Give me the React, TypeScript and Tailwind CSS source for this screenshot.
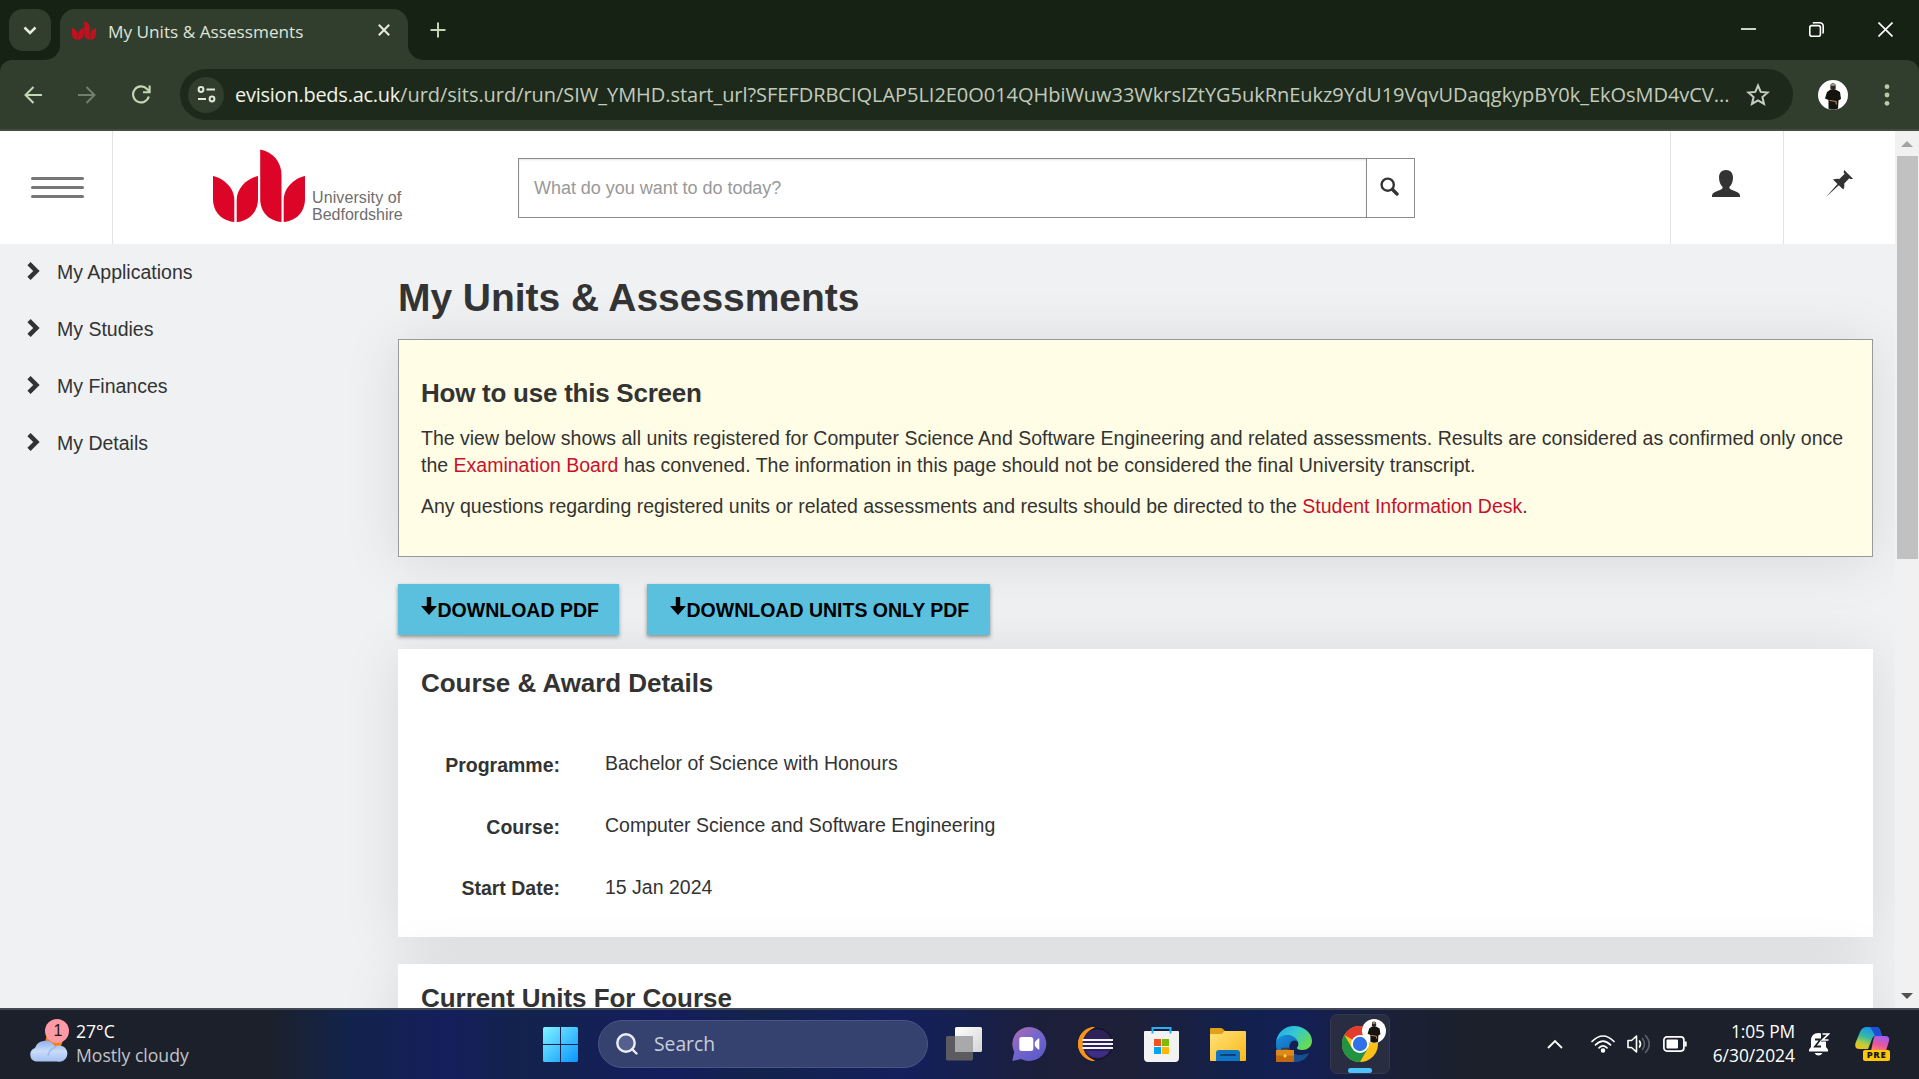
import type { ReactNode } from "react";

const ui = "font-['Open_Sans',sans-serif]";

function Petals({ className, color }: { className: string; color: string }) {
  return (
    <svg viewBox="0 0 92 73" className={className} fill={color} preserveAspectRatio="none">
      <path d="M0 27C11 29.500 21.300 39 21.300 51V73C9 72 0 63 0 50Z" />
      <path d="M45 27V50C45 63 36 72 23.700 73V51C23.700 39 34 29.500 45 27Z" />
      <path d="M47.200 0.500C60 3 68.500 13 68.500 26V73C56 72 47.200 63 47.200 50Z" />
      <path d="M92 27V50C92 63 83 72 70.700 73V51C70.700 39 81 29.500 92 27Z" />
    </svg>
  );
}

function Avatar({ className }: { className: string }) {
  return (
    <svg viewBox="0 0 30 30" className={className}>
      <circle cx="15" cy="15" r="15" fill="#fff" />
      <path d="M12.500 4.500q2.500-2.500 5 0l.3 4q-2.500 3-5.500 0z" fill="#2c2724" />
      <path d="M13 4.600q2-1.600 4 0l-.3 1.200h-3.400z" fill="#b5a58c" />
      <path d="M12.500 9.500 17.500 9.500 22 12 23 19 20.500 20.500 20 28.500Q15 31 10.500 28.500L10.500 20 7 18.500 9 12Z" fill="#15130f" />
      <path d="M11.500 20.500 18 21.500 18.300 24.500" stroke="#b58a4a" strokeWidth="1.200" fill="none" />
    </svg>
  );
}

function TitleBar() {
  return (
    <div className="flex h-[60px] items-start bg-[#162213] pl-[9px]">
      <div className="mt-[9px] flex h-[42px] w-[42px] items-center justify-center rounded-[14px] bg-[#313d2d]">
        <svg viewBox="0 0 14 9" className="h-[9px] w-[14px]" fill="none" stroke="#e6ecdf" strokeWidth="2.500">
          <path d="M1.500 1.500 7 7 12.500 1.500" />
        </svg>
      </div>
      <div className="relative ml-[9px] mt-[9px] flex h-[51px] w-[348px] items-start rounded-t-[15px] bg-[#313d2d] pl-[12px] pr-[18px]">
        <svg viewBox="0 0 15 15" className="absolute -left-[15px] bottom-0 h-[15px] w-[15px]" fill="#313d2d">
          <path d="M15 0A15 15 0 0 1 0 15H15Z" />
        </svg>
        <svg viewBox="0 0 15 15" className="absolute -right-[15px] bottom-0 h-[15px] w-[15px]" fill="#313d2d">
          <path d="M0 0A15 15 0 0 0 15 15H0Z" />
        </svg>
        <Petals className="mt-[12px] h-[19px] w-[24px]" color="#c2101f" />
        <span className={`${ui} ml-[12px] mt-[11px] whitespace-nowrap text-[17.200px] leading-[24px] text-[#dfe5da]`}>My Units &amp; Assessments</span>
        <svg viewBox="0 0 12 12" className="ml-auto mt-[15px] h-[12px] w-[12px]" stroke="#e6ecdf" strokeWidth="2">
          <path d="M.8.8 11.200 11.200M11.200.8.8 11.200" />
        </svg>
      </div>
      <svg viewBox="0 0 16 16" className="ml-[22px] mt-[22px] h-[16px] w-[16px]" stroke="#c3d4b8" strokeWidth="2">
        <path d="M8 .5V15.500M.5 8H15.500" />
      </svg>
      <div className="ml-auto mr-[26px] mt-[22px] flex items-center">
        <svg viewBox="0 0 15 15" className="mr-[53px] h-[15px] w-[15px]" stroke="#fff" strokeWidth="1.600">
          <path d="M0 7H15" />
        </svg>
        <svg viewBox="0 0 15 15" className="mr-[54px] h-[15px] w-[15px]" fill="none" stroke="#fff" strokeWidth="1.600">
          <rect x=".8" y="3.600" width="10.600" height="10.600" rx="2" />
          <path d="M3.800 1Q4.200.8 5.500.8H10.500Q14.200.8 14.200 4.500V9.500Q14.200 11 13.600 11.500" />
        </svg>
        <svg viewBox="0 0 15 15" className="h-[15px] w-[15px]" stroke="#fff" strokeWidth="1.600">
          <path d="M.5.5 14.500 14.500M14.500.5.5 14.500" />
        </svg>
      </div>
    </div>
  );
}

function Toolbar() {
  return (
    <div className="bg-[#162213]">
      <div className="flex h-[71px] items-center rounded-t-[12px] border-b-2 border-[#454b43] bg-[#313d2d] pl-[24px]">
        <svg viewBox="0 0 18 18" className="h-[18px] w-[18px]" fill="none" stroke="#c3d9b6" strokeWidth="2">
          <path d="M18 9H2M9.500 1 1.500 9 9.500 17" />
        </svg>
        <svg viewBox="0 0 18 18" className="ml-[36px] h-[18px] w-[18px]" fill="none" stroke="#727f6c" strokeWidth="2">
          <path d="M0 9H16M8.500 1 16.500 9 8.500 17" />
        </svg>
        <svg viewBox="0 0 19 19" className="ml-[36px] h-[19px] w-[19px]" fill="none" stroke="#c3d9b6" strokeWidth="2.100">
          <path d="M16.800 11.500A8 8 0 1 1 15 4L17.500 6.500" />
          <path d="M11 7.200H17.600V.5" />
        </svg>
        <div className="ml-[29px] flex h-[51px] w-[1613px] items-center rounded-full bg-[#1d2a1b] pl-[8px] pr-[23px]">
          <div className="flex h-[36px] w-[36px] shrink-0 items-center justify-center rounded-full bg-[#313d2d]">
            <svg viewBox="0 0 19 17" className="h-[17px] w-[19px]" fill="none" stroke="#e3eadd" strokeWidth="2">
              <circle cx="4" cy="3.500" r="2.400" />
              <path d="M9.500 3.500H18M1 13H9" />
              <circle cx="15" cy="13" r="2.400" />
            </svg>
          </div>
          <div className={`${ui} ml-[11px] whitespace-nowrap text-[20px] leading-[30px] text-[#c2cabd]`}>
            <span className="tracking-[-0.250px] text-[#f0f3ec]">evision.beds.ac.uk</span>
            <span className="tracking-[-0.035px]">/urd/sits.urd/run/SIW_YMHD.start_url?SFEFDRBCIQLAP5LI2E0O014QHbiWuw33WkrsIZtYG5ukRnEukz9YdU19VqvUDaqgkypBY0k_EkOsMD4vCV...</span>
          </div>
          <svg viewBox="0 0 24 23" className="ml-auto h-[23px] w-[24px] shrink-0" fill="none" stroke="#c6cdc2" strokeWidth="2">
            <path d="M12 2.500 14.700 8.900 21.700 9.500 16.400 14.100 18 20.900 12 17.300 6 20.900 7.600 14.100 2.300 9.500 9.300 8.900Z" />
          </svg>
        </div>
        <Avatar className="ml-[25px] h-[30px] w-[30px]" />
        <svg viewBox="0 0 6 22" className="ml-[36px] h-[22px] w-[6px]" fill="#b5cba9">
          <circle cx="3" cy="2.700" r="2.400" />
          <circle cx="3" cy="11" r="2.400" />
          <circle cx="3" cy="19.300" r="2.400" />
        </svg>
      </div>
    </div>
  );
}

function SiteHeader() {
  return (
    <header className="flex h-[113px] bg-white">
      <div className="flex w-[113px] items-center border-r border-[#e3e3e3] pl-[31px]">
        <div className="mt-[-1px] flex w-[53px] flex-col gap-[6px]">
          <div className="h-[3px] rounded-full bg-[#777]" />
          <div className="h-[3px] rounded-full bg-[#777]" />
          <div className="h-[3px] rounded-full bg-[#777]" />
        </div>
      </div>
      <div className="ml-[100px] flex w-[305px] items-start pt-[18px]">
        <Petals className="h-[73px] w-[92px]" color="#dc0528" />
        <div className="ml-[7px] mt-[40px] text-[16px] leading-[17px] text-[#6e6e6e]">
          <div className="whitespace-nowrap tracking-[0.100px]">University of</div>
          <div className="whitespace-nowrap">Bedfordshire</div>
        </div>
      </div>
      <div className="mt-[27px] flex h-[60px] w-[897px] border border-[#8c8c8c]">
        <div className="flex flex-1 items-center pl-[15px] text-[18px] tracking-[-0.030px] text-[#999] shadow-[inset_0_1px_2px_rgba(0,0,0,0.12)]">What do you want to do today?</div>
        <div className="flex w-[48px] items-center justify-center border-l border-[#8c8c8c]">
          <svg viewBox="0 0 19 19" className="ml-[-2px] mt-[-3px] h-[19px] w-[19px]" fill="none" stroke="#333">
            <circle cx="7.700" cy="7.700" r="6.100" strokeWidth="2.400" />
            <path d="M12.500 12.500 17 17" strokeWidth="3.300" strokeLinecap="round" />
          </svg>
        </div>
      </div>
      <div className="ml-auto flex w-[113px] justify-center border-l border-[#e3e3e3] pr-[2px] pt-[39px]">
        <svg viewBox="0 0 28 27" className="h-[27px] w-[28px]" fill="#333">
          <path d="M14 0C18.500 0 21 3 21 7.500C21 11.500 19.500 15 17.500 16.800C17.300 18.300 17.700 19 19 19.600L25 22Q28 23.300 28 25.500V27H0V25.500Q0 23.300 3 22L9 19.600C10.300 19 10.700 18.300 10.500 16.800C8.500 15 7 11.500 7 7.500C7 3 9.500 0 14 0Z" />
        </svg>
      </div>
      <div className="flex w-[112px] justify-center border-l border-[#e3e3e3] pt-[39px]">
        <svg viewBox="0 0 27 27" className="h-[27px] w-[27px]" fill="#333">
          <path d="M18.200 0 27 8.700 24.500 9.300 23.300 8.300 18.300 13.500Q18.800 17 17.300 19.500L12.800 15.200 0 27 11.500 13.900 7 9.400Q10.500 8.200 13.400 8.900L18.700 3.700 17.600 2.500Z" />
        </svg>
      </div>
    </header>
  );
}

const navItems = ["My Applications", "My Studies", "My Finances", "My Details"];

function SideNav() {
  return (
    <nav className="w-[398px] shrink-0">
      {navItems.map((item) => (
        <div key={item} className="flex h-[57px] items-center pl-[27px]">
          <svg viewBox="0 0 13 18" className="mt-[-3px] h-[18px] w-[13px]" fill="#333">
            <path d="M3.600 0 12.600 9 3.600 18 0.400 14.800 6.200 9 0.400 3.200Z" />
          </svg>
          <span className="ml-[17px]">{item}</span>
        </div>
      ))}
    </nav>
  );
}

function DownloadButton({ children, className }: { children: ReactNode; className: string }) {
  return (
    <div className={`flex h-[51px] items-center bg-[#5bc0de] pl-[23px] font-bold text-black shadow-[0_2px_4px_rgba(0,0,0,0.4)] ${className}`}>
      <svg viewBox="0 0 16 18" className="mt-[-7px] h-[18px] w-[16px]" fill="#000">
        <path d="M5.800 0H10.200V9H16L8 18 0 9H5.800Z" />
      </svg>
      <span className="ml-[0.500px] mt-[2px] whitespace-nowrap">{children}</span>
    </div>
  );
}

const details = [
  ["Programme:", "Bachelor of Science with Honours"],
  ["Course:", "Computer Science and Software Engineering"],
  ["Start Date:", "15 Jan 2024"],
];

const cardShadow = "shadow-[0_4px_54px_rgba(0,0,0,0.100)]";

function Content() {
  return (
    <main className="w-[1475px] shrink-0">
      <h1 className="pt-[34px] text-[39px] font-bold leading-[39px] tracking-[-0.050px]">My Units &amp; Assessments</h1>
      <section className={`mt-[22px] h-[218px] border border-[#999] bg-[#fffde5] px-[22px] pt-[39px] ${cardShadow}`}>
        <h2 className="text-[26px] font-bold leading-[29px] tracking-[-0.250px]">How to use this Screen</h2>
        <p className="mt-[17px] leading-[27px]">
          <span className="whitespace-nowrap">The view below shows all units registered for Computer Science And Software Engineering and related assessments. Results are considered as confirmed only once</span>
          <br />
          the <a className="text-[#c8102e]">Examination Board</a> has convened. The information in this page should not be considered the final University transcript.
        </p>
        <p className="mt-[14px] leading-[27px]">
          Any questions regarding registered units or related assessments and results should be directed to the <a className="text-[#c8102e]">Student Information Desk</a>.
        </p>
      </section>
      <div className="mt-[27px] flex gap-[28px]">
        <DownloadButton className="w-[221px]">DOWNLOAD PDF</DownloadButton>
        <DownloadButton className="w-[343px]">DOWNLOAD UNITS ONLY PDF</DownloadButton>
      </div>
      <section className={`mt-[14px] h-[288px] bg-white pt-[20px] ${cardShadow}`}>
        <h2 className="px-[23px] text-[26px] font-bold leading-[29px] tracking-[-0.050px]">Course &amp; Award Details</h2>
        <dl className="mt-[35px]">
          {details.map(([label, value]) => (
            <div key={label} className="group flex h-[62px] items-center">
              <dt className="w-[162px] pt-[4px] text-right font-bold group-last:pt-[2px]">{label}</dt>
              <dd className="ml-[45px]">{value}</dd>
            </div>
          ))}
        </dl>
      </section>
      <section className={`mt-[27px] h-[200px] bg-white px-[23px] pt-[20px] ${cardShadow}`}>
        <h2 className="text-[26px] font-bold leading-[29px] tracking-[-0.050px]">Current Units For Course</h2>
      </section>
    </main>
  );
}

function Scrollbar() {
  return (
    <div className="relative flex w-[24px] shrink-0 flex-col items-center bg-[#f1f1f1]">
      <svg viewBox="0 0 12 6" className="mt-[10px] h-[6px] w-[12px]" fill="#a3a3a3">
        <path d="M6 0 12 6H0Z" />
      </svg>
      <div className="mt-[9px] h-[403px] w-[21px] bg-[#c1c1c1]" />
      <svg viewBox="0 0 12 6" className="mb-[9px] mt-auto h-[6px] w-[12px]" fill="#505050">
        <path d="M6 6 12 0H0Z" />
      </svg>
    </div>
  );
}

function WeatherIcon() {
  return (
    <div className="relative ml-[28px] mt-[-5px] h-[45px] w-[42px]">
      <svg viewBox="0 0 42 45" className="h-[45px] w-[42px]">
        <defs>
          <linearGradient id="cloud" x1="0" y1="0" x2="0" y2="1">
            <stop offset="0" stopColor="#8fb2ee" />
            <stop offset=".5" stopColor="#c9dbf8" />
            <stop offset="1" stopColor="#a3c0f2" />
          </linearGradient>
        </defs>
        <circle cx="26" cy="22" r="8.500" fill="#f2811d" />
        <path d="M8 42.500A7 7 0 0 1 7 29A11 11 0 0 1 27 27.500A8.200 8.200 0 1 1 29 42.500Z" fill="url(#cloud)" />
        <path d="M20 37Q21 30 28 28" fill="none" stroke="#87a9e8" strokeWidth="1.500" opacity=".6" />
      </svg>
      <div className="absolute left-[17px] top-0 flex h-[24px] w-[24px] items-center justify-center rounded-full bg-[#ff99a4] pl-[2px] text-[16px] leading-none text-[#1a1a1a]">1</div>
    </div>
  );
}

function WindowsIcon() {
  return (
    <svg viewBox="0 0 35 35" className="ml-[349px] mt-[2px] h-[35px] w-[35px] shrink-0">
      <defs>
        <linearGradient id="win" x1="0" y1="0" x2="1" y2="1">
          <stop offset="0" stopColor="#80f4ff" />
          <stop offset="1" stopColor="#0a94ff" />
        </linearGradient>
      </defs>
      <path d="M1.500 0H17V17H0V1.500Q0 0 1.500 0ZM18 0H33.500Q35 0 35 1.500V17H18ZM0 18H17V35H1.500Q0 35 0 33.500ZM18 18H35V33.500Q35 35 33.500 35H18Z" fill="url(#win)" />
    </svg>
  );
}

function TaskViewIcon() {
  return (
    <svg viewBox="0 0 36 36" className="h-[36px] w-[36px]">
      <defs>
        <linearGradient id="tv1" x1="0" y1="0" x2="1" y2="1">
          <stop offset="0" stopColor="#fff" />
          <stop offset="1" stopColor="#d4d4d4" />
        </linearGradient>
      </defs>
      <rect x="0" y="10" width="27" height="24.500" rx="1.500" fill="#5c5c60" />
      <rect x="9" y="1" width="27" height="25" rx="1.500" fill="url(#tv1)" />
      <rect x="9" y="10" width="18" height="16" fill="#a9a9ab" />
    </svg>
  );
}

function ChatIcon() {
  return (
    <svg viewBox="0.700 0 36 36" className="h-[36px] w-[36px]">
      <defs>
        <linearGradient id="chat" x1="0" y1="0" x2=".8" y2="1">
          <stop offset="0" stopColor="#b26cae" />
          <stop offset=".5" stopColor="#7566cc" />
          <stop offset="1" stopColor="#5a59c8" />
        </linearGradient>
      </defs>
      <path d="M18 1A17 17 0 1 1 10 33L1 35 3 26A17 17 0 0 1 18 1Z" fill="url(#chat)" />
      <rect x="8" y="11" width="14" height="14" rx="2.500" fill="#fff" />
      <path d="M23.500 16 27 12.500H28V23.500H27L23.500 20Z" fill="#fff" />
    </svg>
  );
}

function EclipseIcon() {
  return (
    <svg viewBox="0 0 36 36" className="h-[36px] w-[36px]">
      <path d="M17 1A17 17 0 0 0 17 35Q8 30 8 18 8 6 17 1Z" fill="#f7941e" />
      <circle cx="19.300" cy="18" r="15.500" fill="#2c2255" stroke="#0e0c1a" strokeWidth="1" />
      <path d="M17 1A17 17 0 0 0 17 35Q4.500 29 4.500 18 4.500 7 17 1Z" fill="#f7941e" />
      <path d="M8 25H31Q27 31.500 19.500 31.500 12 31.500 8 25Z" fill="#46339c" opacity=".7" />
      <path d="M4.500 14H35M4.500 18H35M4.500 22H35" stroke="#f4f3fb" strokeWidth="2.200" />
    </svg>
  );
}

function StoreIcon() {
  return (
    <svg viewBox="0.500 0 36 36" className="h-[36px] w-[36px]">
      <path d="M1.500 5H34.500Q35.500 5 35.500 6V32Q35.500 36 31.500 36H4.500Q.5 36 .5 32V6Q.5 5 1.500 5Z" fill="#f3f3f4" />
      <path d="M9 7.500V2H27V7.500" fill="none" stroke="#29b1f5" strokeWidth="2" />
      <rect x="10.500" y="13" width="7" height="7" fill="#f25022" />
      <rect x="18.500" y="13" width="7" height="7" fill="#7fba00" />
      <rect x="10.500" y="21" width="7" height="7" fill="#00a4ef" />
      <rect x="18.500" y="21" width="7" height="7" fill="#ffb900" />
    </svg>
  );
}

function ExplorerIcon() {
  return (
    <svg viewBox="0 0 36 36" className="h-[36px] w-[36px]">
      <defs>
        <linearGradient id="fold" x1="0" y1="0" x2="1" y2="1">
          <stop offset="0" stopColor="#ffe27a" />
          <stop offset="1" stopColor="#fbb917" />
        </linearGradient>
      </defs>
      <path d="M0 8V3Q0 2 1 2H11Q12 2 13 3L15.500 5.500 12 9Z" fill="#e0a017" />
      <path d="M0 8H11Q12 8 13 7L14.500 5H35Q36 5 36 6V34Q36 35 35 35H1Q0 35 0 34Z" fill="url(#fold)" />
      <path d="M6 35V27Q6 24 9 24H27Q30 24 30 27V35Z" fill="#0f74c4" />
      <path d="M11 29H25" stroke="#0a3f77" strokeWidth="1.800" strokeLinecap="round" />
    </svg>
  );
}

function EdgeIcon() {
  return (
    <svg viewBox="0 0 36 36" className="h-[36px] w-[36px]">
      <defs>
        <linearGradient id="edgeTop" x1="0" y1="0" x2="1" y2=".6">
          <stop offset="0" stopColor="#1fa4e8" />
          <stop offset=".5" stopColor="#35c8d4" />
          <stop offset="1" stopColor="#66dc50" />
        </linearGradient>
        <linearGradient id="edgeBody" x1="0" y1="0" x2="1" y2="1">
          <stop offset="0" stopColor="#1590df" />
          <stop offset="1" stopColor="#114f9d" />
        </linearGradient>
      </defs>
      <path d="M0 18C0 10 7 8 11 9C17 9 21 12 21.500 16C17 12 12.500 17 13.500 23C15 29 24 31 33 27C30 33 25 36 18 36C7 36 0 28 0 18Z" fill="url(#edgeBody)" />
      <path d="M13.500 22C14 29 24 31 33 27C30 33 25 36 18 36C15 34 11 28 13.500 22Z" fill="#164f8f" />
      <path d="M0 16C1.500 6 9 0 18 0C28 0 36 7 36 15C36 21 31 24 26.500 24C22.500 24 20.500 23 21 21.500C23 19.500 22.500 17 21.500 15C19.500 11 15 9 11 9C6 9 2 11.500 0 16Z" fill="url(#edgeTop)" />
      <path d="M6 24V22.500H13V24" stroke="#5e3209" strokeWidth="1.300" fill="none" />
      <rect x="0" y="24" width="18" height="12" rx=".8" fill="#c26a10" />
      <rect x="0" y="24" width="18" height="5.500" fill="#dd8a1c" />
      <rect x="7.700" y="28.500" width="2.600" height="2.800" fill="#ffd94a" />
    </svg>
  );
}

function ChromeIcon() {
  return (
    <svg viewBox="0 0 36 36" className="h-[36px] w-[36px]">
      <circle cx="18" cy="18" r="18" fill="#fbc116" />
      <path d="M18 18 2.400 9A18 18 0 0 1 33.600 9H18Z" fill="#e33b2e" />
      <path d="M2.400 9A18 18 0 0 0 18 36L25.800 22.500 18 18 10.200 22.500Z" fill="#229342" />
      <circle cx="18" cy="18" r="9" fill="#fff" />
      <circle cx="18" cy="18" r="7.200" fill="#3071e8" />
    </svg>
  );
}

function Tray() {
  return (
    <div className="ml-auto flex h-full items-center pr-[29px]">
      <svg viewBox="0 0 16 10" className="h-[10px] w-[16px]" fill="none" stroke="#fff" strokeWidth="1.800">
        <path d="M1 9 8 2 15 9" />
      </svg>
      <svg viewBox="0 0 24 18" className="ml-[28px] h-[18px] w-[24px]" fill="none" stroke="#fff" strokeWidth="1.700" strokeLinecap="round">
        <path d="M1 6.500Q12-4.500 23 6.500M4.500 9.800Q12 2.300 19.500 9.800M8 12.800Q12 9 16 12.800" />
        <circle cx="12" cy="15.400" r="1.400" fill="#fff" />
      </svg>
      <svg viewBox="0 0 24 20" className="ml-[12px] h-[20px] w-[24px]" fill="none" stroke="#fff" strokeWidth="1.600" strokeLinejoin="round" strokeLinecap="round">
        <path d="M1 6.500H4.500L9.500 2V18L4.500 13.500H1Z" />
        <path d="M12.500 7Q14.500 10 12.500 13" />
        <path d="M15.500 4.500Q19.500 10 15.500 15.500M18.500 1.500Q26 10 18.500 18.500" stroke="#5c6069" />
      </svg>
      <svg viewBox="0 0 24 16" className="ml-[12px] h-[16px] w-[24px]" fill="none" stroke="#fff" strokeWidth="1.700">
        <rect x=".9" y=".9" width="20" height="14.200" rx="3" />
        <rect x="3.500" y="3.500" width="11.500" height="9" rx="1" fill="#fff" stroke="none" />
        <path d="M22.500 5.500V10.500" strokeWidth="2.400" />
      </svg>
      <div className={`${ui} mt-[-2px] ml-[21px] w-[87px] text-right text-[17.400px] leading-[24px] text-white`}>
        <div className="tracking-[-0.150px]">1:05 PM</div>
        <div>6/30/2024</div>
      </div>
      <svg viewBox="0 0 22 24" className="ml-[13px] h-[24px] w-[22px]">
        <path d="M1 17.500 3 15V9Q3 1 10.500 1 18 1 18 9V15L20 17.500V19.500H1Z" fill="#fff" />
        <path d="M6.500 21H14.500Q13 23.500 10.500 23.500 8 23.500 6.500 21Z" fill="#fff" />
        <path d="M13 0H22V9.500H13Z" fill="#1b202b" />
        <path d="M7 7.500H12.500L7 14.500H13" fill="none" stroke="#1b202b" strokeWidth="1.800" />
        <path d="M14.500 2H20.500L14.500 8H20.500" fill="none" stroke="#fff" strokeWidth="1.700" />
      </svg>
      <div className="relative ml-[25px] h-[34px] w-[35px]">
        <svg viewBox="0 0 35 34" className="h-[34px] w-[35px]">
          <defs>
            <linearGradient id="cpL" x1=".6" y1="0" x2=".2" y2="1">
              <stop offset="0" stopColor="#1b8ff0" />
              <stop offset=".45" stopColor="#35b8a8" />
              <stop offset=".75" stopColor="#b8cf3c" />
              <stop offset="1" stopColor="#f5c21a" />
            </linearGradient>
            <linearGradient id="cpR" x1=".6" y1="0" x2=".3" y2="1">
              <stop offset="0" stopColor="#a35df0" />
              <stop offset=".6" stopColor="#e9569a" />
              <stop offset="1" stopColor="#ff8a5c" />
            </linearGradient>
          </defs>
          <path d="M12 0H21Q24 0 25 3L27 9H20Q18 9 17 12L13 22H5Q-1 22 .5 16L5 5Q7 0 12 0Z" fill="url(#cpL)" />
          <path d="M15 0H21Q24 0 25 3L27 9H20Q18 4 15 0Z" fill="#1c4fd6" />
          <path d="M21 9H30Q35 9 34 14L31 24H16L18.500 12Q19 9 21 9Z" fill="url(#cpR)" />
        </svg>
        <div className={`${ui} absolute bottom-0 left-[8px] flex h-[11px] w-[27px] items-center justify-center rounded-[2px] bg-[#ffc60a] text-[9.500px] font-extrabold leading-none tracking-[0.600px] text-[#1a1a1a]`}>PRE</div>
      </div>
    </div>
  );
}

function Taskbar() {
  return (
    <div className="relative flex h-[71px] items-center bg-[linear-gradient(90deg,#1c202b_0px,#1c202b_270px,#12234c_350px,#151f5c_450px,#12234c_520px,#151d5e_670px,#12234c_750px,#141f5c_900px,#16204f_960px,#1c1f3a_1040px,#1e2038_1130px,#11204f_1250px,#141f55_1300px,#1b2035_1400px,#1b202b_1480px,#1b202b_1919px)]">
      <div className="absolute inset-x-0 top-0 h-[2px] bg-[#434855]" />
      <WeatherIcon />
      <div className={`${ui} ml-[6px] mt-[-2px] w-[118px] text-[17.600px] leading-[24px]`}>
        <div className="text-white">27°C</div>
        <div className="whitespace-nowrap text-[#c3c4c8]">Mostly cloudy</div>
      </div>
      <WindowsIcon />
      <div className="ml-[20px] mt-[1px] flex h-[48px] w-[330px] shrink-0 items-center rounded-full border border-[#4a5584] bg-[#35416f] pl-[17px]">
        <svg viewBox="0 0 22 22" className="h-[22px] w-[22px]" fill="none" stroke="#eceef5" strokeWidth="2.400" strokeLinecap="round">
          <circle cx="10" cy="10" r="8.700" fill="#55608e" />
          <path d="M16.300 16.300 20.500 20.500" />
        </svg>
        <span className={`${ui} ml-[16px] text-[19.300px] leading-[26px] text-[#c9cddd]`}>Search</span>
      </div>
      <div className="ml-[18px] mt-px flex shrink-0 items-center gap-[30px]">
        <TaskViewIcon />
        <ChatIcon />
        <EclipseIcon />
        <StoreIcon />
        <ExplorerIcon />
        <EdgeIcon />
        <div className="relative -ml-[12px] flex h-[60px] w-[60px] items-center justify-center rounded-[7px] border border-[#34394e] bg-[#282d42]">
          <ChromeIcon />
          <Avatar className="absolute right-[3px] top-[4px] h-[24px] w-[24px]" />
          <div className="absolute bottom-0 left-[17px] h-[5px] w-[24px] rounded-full bg-[#4cc2ff]" />
        </div>
      </div>
      <Tray />
    </div>
  );
}

export default function App() {
  return (
    <div className="flex h-[1079px] w-[1919px] flex-col overflow-hidden bg-[#162213] font-['Liberation_Sans',Arial,sans-serif]">
      <TitleBar />
      <Toolbar />
      <div className="flex h-[877px] overflow-hidden bg-[#eff1f3] text-[19.500px] text-[#333]">
        <div className="w-[1895px] shrink-0 overflow-hidden">
          <SiteHeader />
          <div className="flex">
            <SideNav />
            <Content />
          </div>
        </div>
        <Scrollbar />
      </div>
      <Taskbar />
    </div>
  );
}
